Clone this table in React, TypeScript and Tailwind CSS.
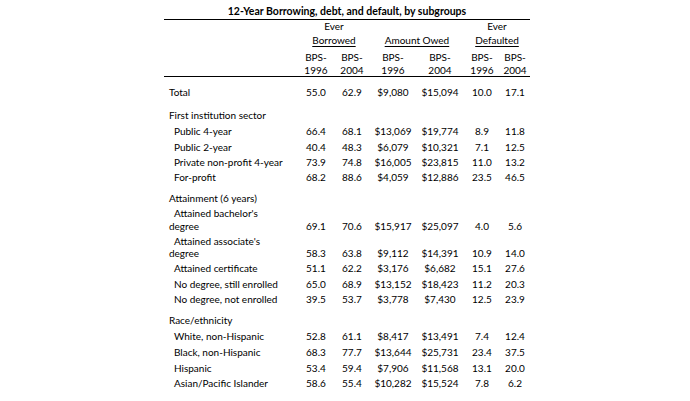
type Row = {
  label: string
  second?: string
  values: string[]
  h: string
  indent?: boolean
}

const sections: { title: string; titleH: string; spacerH: string; rows: Row[] }[] = [
  {
    title: 'First institution sector',
    titleH: 'h-[16px]',
    spacerH: 'h-[8px]',
    rows: [
      { label: 'Public 4-year', values: ['66.4', '68.1', '$13,069', '$19,774', '8.9', '11.8'], h: 'h-[16px]' },
      { label: 'Public 2-year', values: ['40.4', '48.3', '$6,079', '$10,321', '7.1', '12.5'], h: 'h-[15px]' },
      { label: 'Private non-profit 4-year', values: ['73.9', '74.8', '$16,005', '$23,815', '11.0', '13.2'], h: 'h-[15px]' },
      { label: 'For-profit', values: ['68.2', '88.6', '$4,059', '$12,886', '23.5', '46.5'], h: 'h-[16px]' },
    ],
  },
  {
    title: 'Attainment (6 years)',
    titleH: 'h-[14px]',
    spacerH: 'h-[6px]',
    rows: [
      { label: "Attained bachelor's", second: 'degree', values: ['69.1', '70.6', '$15,917', '$25,097', '4.0', '5.6'], h: 'h-[28px]' },
      { label: "Attained associate's", second: 'degree', values: ['58.3', '63.8', '$9,112', '$14,391', '10.9', '14.0'], h: 'h-[27px]' },
      { label: 'Attained certificate', values: ['51.1', '62.2', '$3,176', '$6,682', '15.1', '27.6'], h: 'h-[16px]' },
      { label: 'No degree, still enrolled', values: ['65.0', '68.9', '$13,152', '$18,423', '11.2', '20.3'], h: 'h-[15px]' },
      { label: 'No degree, not enrolled', values: ['39.5', '53.7', '$3,778', '$7,430', '12.5', '23.9'], h: 'h-[15px]' },
    ],
  },
  {
    title: 'Race/ethnicity',
    titleH: 'h-[16px]',
    spacerH: 'h-[6px]',
    rows: [
      { label: 'White, non-Hispanic', values: ['52.8', '61.1', '$8,417', '$13,491', '7.4', '12.4'], h: 'h-[16px]' },
      { label: 'Black, non-Hispanic', values: ['68.3', '77.7', '$13,644', '$25,731', '23.4', '37.5'], h: 'h-[16px]' },
      { label: 'Hispanic', values: ['53.4', '59.4', '$7,906', '$11,568', '13.1', '20.0'], h: 'h-[15px]' },
      { label: 'Asian/Pacific Islander', values: ['58.6', '55.4', '$10,282', '$15,524', '7.8', '6.2'], h: 'h-[15px]' },
    ],
  },
]

const cell = 'p-0 text-center align-middle leading-[13px] whitespace-nowrap'

function DataRow({ row }: { row: Row }) {
  const twoLine = !!row.second
  return (
    <tr className={row.h}>
      <td className={`p-0 pl-[5px] indent-[5px] align-middle whitespace-nowrap ${twoLine ? 'leading-[12.5px]' : 'leading-[13px]'}`}>
        {row.label}
        {twoLine && (
          <>
            <br />
            {row.second}
          </>
        )}
      </td>
      {row.values.map((v, i) => (
        <td key={i} className={twoLine ? 'p-0 pb-[1px] text-center align-bottom leading-[13px] whitespace-nowrap' : cell}>
          {v}
        </td>
      ))}
    </tr>
  )
}

export default function App() {
  return (
    <div className="flex min-h-[401px] w-[690px] justify-center bg-white pl-[4px] font-['Lato',sans-serif] text-[10px] text-black">
      <table className="w-[366px] table-fixed border-collapse self-start">
        <colgroup>
          <col className="w-[134px]" />
          <col className="w-[36px]" />
          <col className="w-[36px]" />
          <col className="w-[46px]" />
          <col className="w-[48px]" />
          <col className="w-[36px]" />
          <col className="w-[30px]" />
        </colgroup>
        <tbody>
          <tr className="h-[19px]">
            <td colSpan={7} className="border-b border-black p-0 pb-[1px] text-center align-bottom text-[10.5px] leading-[14px] font-bold">
              12-Year Borrowing, debt, and default, by subgroups
            </td>
          </tr>
          <tr className="h-[14px]">
            <td className="p-0" />
            <td colSpan={2} className={cell}>Ever</td>
            <td colSpan={2} className="p-0" />
            <td colSpan={2} className={cell}>Ever</td>
          </tr>
          <tr className="h-[14px]">
            <td className="p-0" />
            <td colSpan={2} className={cell}><span className="underline underline-offset-[2px]">Borrowed</span></td>
            <td colSpan={2} className={cell}><span className="underline underline-offset-[2px]">Amount Owed</span></td>
            <td colSpan={2} className={cell}><span className="underline underline-offset-[2px]">Defaulted</span></td>
          </tr>
          <tr className="h-[17px]">
            <td className="p-0" />
            {['BPS-', 'BPS-', 'BPS-', 'BPS-', 'BPS-', 'BPS-'].map((t, i) => (
              <td key={i} className="p-0 text-center align-bottom leading-[14px]">{t}</td>
            ))}
          </tr>
          <tr className="h-[12px]">
            <td className="border-b border-black p-0" />
            {['1996', '2004', '1996', '2004', '1996', '2004'].map((t, i) => (
              <td key={i} className="border-b border-black p-0 text-center align-middle leading-[12px]">{t}</td>
            ))}
          </tr>
          <tr className="h-[9px]"><td colSpan={7} className="p-0" /></tr>
          <tr className="h-[14px]">
            <td className="p-0 pl-[5px] align-middle leading-[13px]">Total</td>
            {['55.0', '62.9', '$9,080', '$15,094', '10.0', '17.1'].map((v, i) => (
              <td key={i} className={cell}>{v}</td>
            ))}
          </tr>
          {sections.map((s) => (
            <SectionRows key={s.title} section={s} />
          ))}
        </tbody>
      </table>
    </div>
  )
}

function SectionRows({ section }: { section: (typeof sections)[number] }) {
  return (
    <>
      <tr className={section.spacerH}><td colSpan={7} className="p-0" /></tr>
      <tr className={section.titleH}>
        <td colSpan={7} className="p-0 pl-[5px] align-middle leading-[13px]">{section.title}</td>
      </tr>
      {section.rows.map((r) => (
        <DataRow key={r.label} row={r} />
      ))}
    </>
  )
}
